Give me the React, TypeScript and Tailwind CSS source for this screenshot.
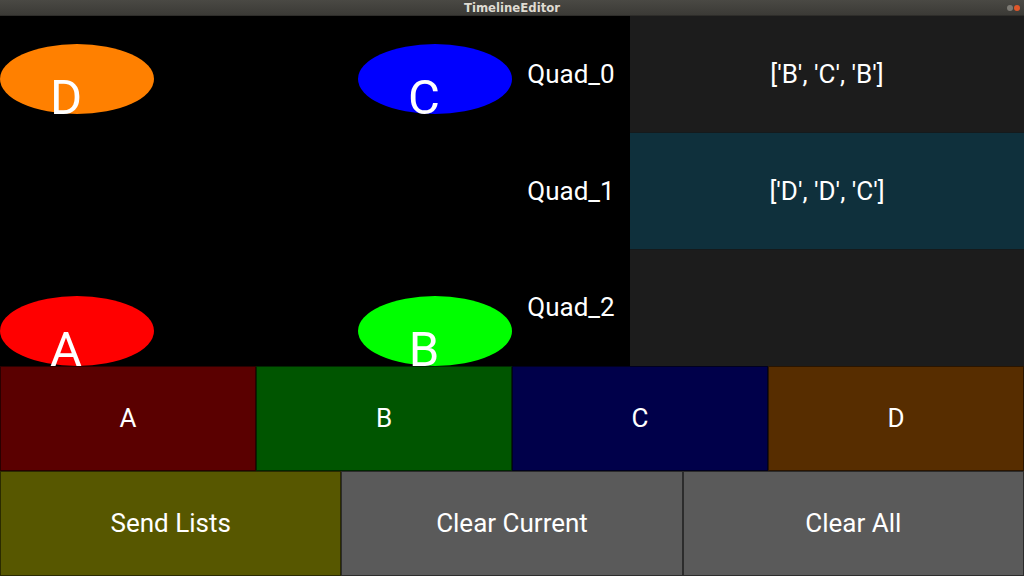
import React from "react";

const Blob = ({ left, top, color, letter, letterTop }: { left: number; top: number; color: string; letter: string; letterTop: number }) => (
  <>
    <div className={`absolute w-[154px] h-[70px] rounded-[50%] ${color}`} style={{ left, top }} />
    <div
      className="absolute w-[60px] text-center text-white text-[49px] leading-none"
      style={{ left: left + 36, top: letterTop }}
    >
      {letter}
    </div>
  </>
);

export default function App() {
  return (
    <div className="w-[1024px] h-[576px] flex flex-col bg-black overflow-hidden" style={{ fontFamily: "Roboto, sans-serif" }}>
      <div className="h-[16px] shrink-0 relative flex items-center justify-center bg-gradient-to-b from-[#4a4944] to-[#3b3a36] border-b border-[#2e2d2a]">
        <span className="text-[13px] font-bold text-[#dfdbd2] leading-none" style={{ fontFamily: "'DejaVu Sans Condensed','DejaVu Sans', sans-serif" }}>
          TimelineEditor
        </span>
        <div className="absolute right-[4px] top-[5px] flex gap-[1px]">
          <div className="w-[6px] h-[6px] rounded-full bg-[#7d7b75]" />
          <div className="w-[6px] h-[6px] rounded-full bg-[#e0572a]" />
        </div>
      </div>
      <div className="h-[350px] flex shrink-0">
        <div className="w-[512px] relative bg-black">
          <Blob left={0} top={28} color="bg-[#ff8000]" letter="D" letterTop={57} />
          <Blob left={358} top={28} color="bg-[#0000ff]" letter="C" letterTop={57} />
          <Blob left={0} top={280} color="bg-[#ff0000]" letter="A" letterTop={309} />
          <Blob left={358} top={280} color="bg-[#00ff00]" letter="B" letterTop={309} />
        </div>
        <div className="w-[118px] flex flex-col relative z-10">
          {["Quad_0", "Quad_1", "Quad_2"].map((q) => (
            <div key={q} className="flex-1 flex items-center justify-center text-white text-[26px]">
              {q}
            </div>
          ))}
        </div>
        <div className="flex-1 flex flex-col">
          <div className="flex-1 flex items-center justify-center bg-[#1c1c1c] text-white text-[26px]">['B', 'C', 'B']</div>
          <div className="flex-1 flex items-center justify-center bg-[#0f303c] border-y border-[#151a1c] text-white text-[26px]">['D', 'D', 'C']</div>
          <div className="flex-1 flex items-center justify-center bg-[#1c1c1c] text-white text-[26px]"></div>
        </div>
      </div>
      <div className="h-[105px] grid grid-cols-4 shrink-0 relative z-20">
        <div className="flex items-center justify-center bg-[#5a0000] border border-[#2a0000] text-white text-[26px]">A</div>
        <div className="flex items-center justify-center bg-[#005500] border border-[#002800] text-white text-[26px]">B</div>
        <div className="flex items-center justify-center bg-[#00004a] border border-[#000020] text-white text-[26px]">C</div>
        <div className="flex items-center justify-center bg-[#572d00] border border-[#2a1500] text-white text-[26px]">D</div>
      </div>
      <div className="h-[105px] grid grid-cols-3 shrink-0">
        <div className="flex items-center justify-center bg-[#575700] border border-[#2b2b00] text-white text-[26px]">Send Lists</div>
        <div className="flex items-center justify-center bg-[#5a5a5a] border border-[#2c2c2c] text-white text-[26px]">Clear Current</div>
        <div className="flex items-center justify-center bg-[#5a5a5a] border border-[#2c2c2c] text-white text-[26px]">Clear All</div>
      </div>
    </div>
  );
}
